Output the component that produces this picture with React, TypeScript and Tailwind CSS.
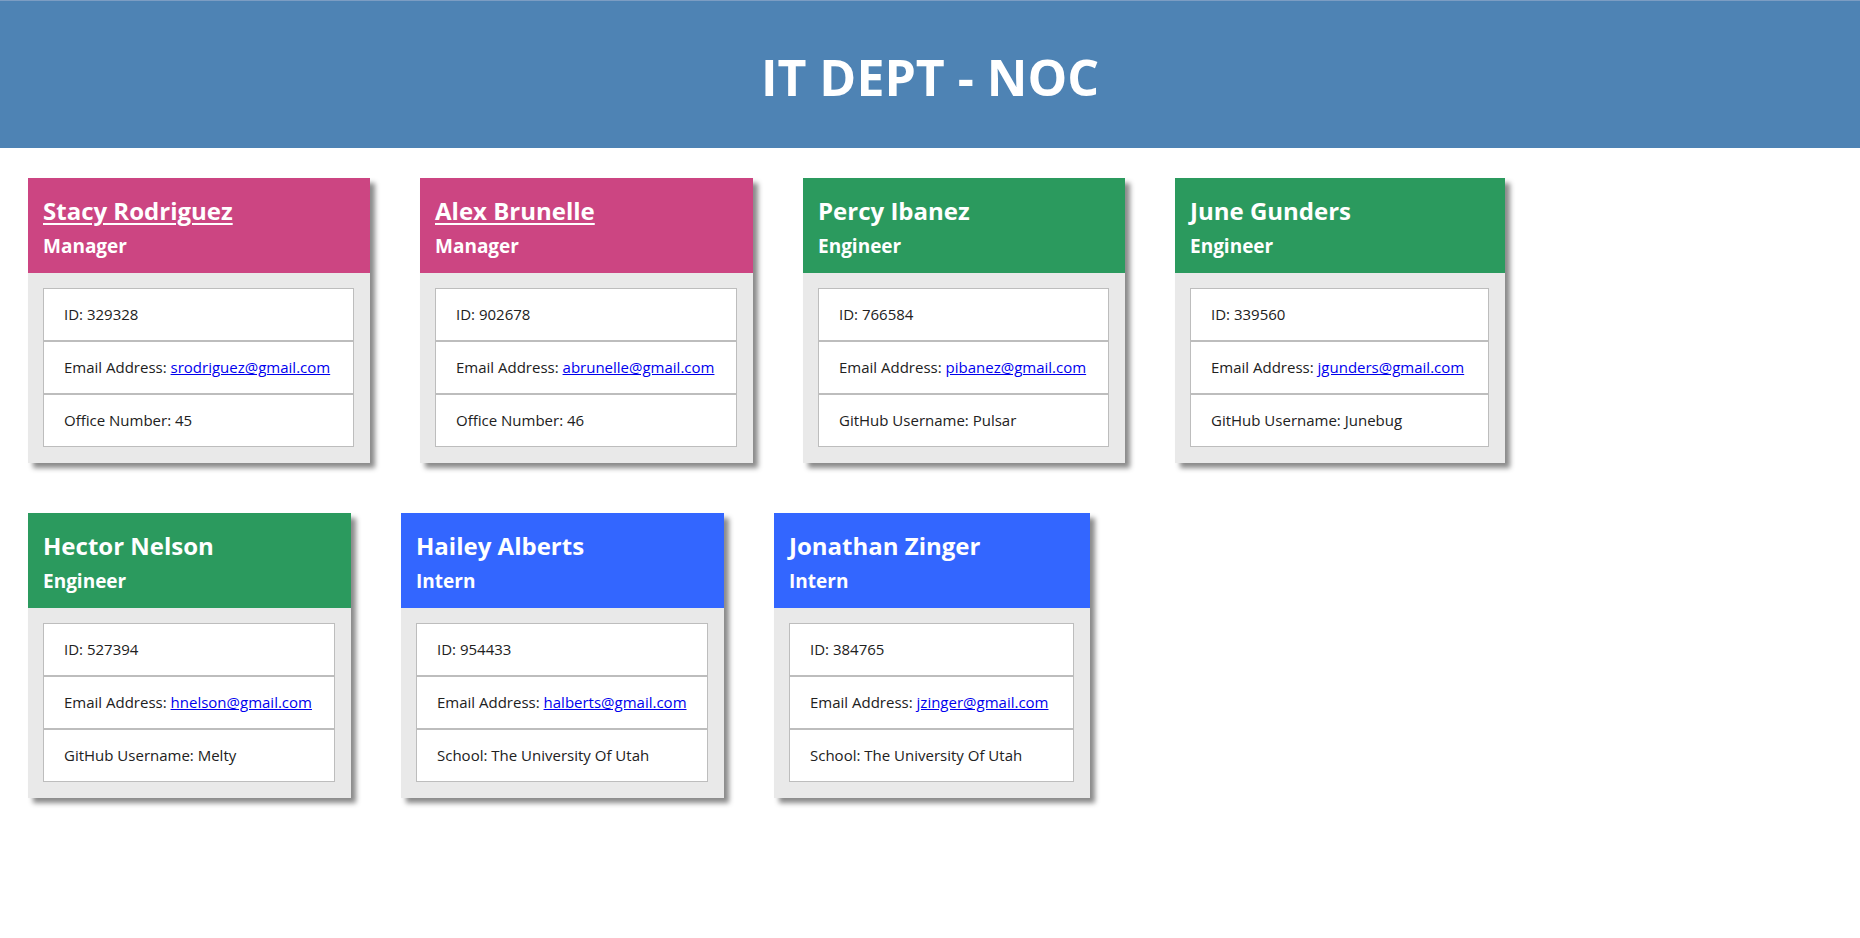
import React from "react";

interface Employee {
    name: string;
    role: "Manager" | "Engineer" | "Intern";
    id: string;
    email: string;
    extraLabel: string;
    extraValue: string;
    width: string;
}

const team: Employee[] = [
    { name: "Stacy Rodriguez", role: "Manager", id: "329328", email: "srodriguez@gmail.com", extraLabel: "Office Number", extraValue: "45", width: "w-[342px]" },
    { name: "Alex Brunelle", role: "Manager", id: "902678", email: "abrunelle@gmail.com", extraLabel: "Office Number", extraValue: "46", width: "w-[333px]" },
    { name: "Percy Ibanez", role: "Engineer", id: "766584", email: "pibanez@gmail.com", extraLabel: "GitHub Username", extraValue: "Pulsar", width: "w-[322px]" },
    { name: "June Gunders", role: "Engineer", id: "339560", email: "jgunders@gmail.com", extraLabel: "GitHub Username", extraValue: "Junebug", width: "w-[330px]" },
    { name: "Hector Nelson", role: "Engineer", id: "527394", email: "hnelson@gmail.com", extraLabel: "GitHub Username", extraValue: "Melty", width: "w-[323px]" },
    { name: "Hailey Alberts", role: "Intern", id: "954433", email: "halberts@gmail.com", extraLabel: "School", extraValue: "The University Of Utah", width: "w-[323px]" },
    { name: "Jonathan Zinger", role: "Intern", id: "384765", email: "jzinger@gmail.com", extraLabel: "School", extraValue: "The University Of Utah", width: "w-[316px]" },
];

const headerColor = {
    Manager: "bg-[#cc4582]",
    Engineer: "bg-[#2b9a5e]",
    Intern: "bg-[#3366ff]",
};

function EmployeeCard({ emp }: { emp: Employee }) {
    const isManager = emp.role === "Manager";
    return (
        <div className={`${emp.width} bg-[#e9e9e9] shadow-[5px_5px_5px_#8a8a8a]`}>
            <div className={`${headerColor[emp.role]} h-[95px] px-[15px] pt-[18px] text-white`}>
                <h2 className={`text-[24px] leading-[30px] font-bold ${isManager ? "underline underline-offset-[3px] decoration-2" : ""}`}>
                    {emp.name}
                </h2>
                <h3 className="mt-[9px] text-[19px] leading-[22px] font-bold">{emp.role}</h3>
            </div>
            <div className="pt-[15px] pr-[16px] pb-[16px] pl-[15px]">
                <ul className="bg-white text-[15px] leading-[25px] text-[#212121] whitespace-nowrap">
                    <li className="border border-[#bdbdbd] px-[20px] py-[13px]">ID: {emp.id}</li>
                    <li className="border border-[#bdbdbd] px-[20px] py-[13px]">
                        Email Address:{" "}
                        <a href={`mailto:${emp.email}`} className="text-[#0000ee] underline">
                            {emp.email}
                        </a>
                    </li>
                    <li className="border border-[#bdbdbd] px-[20px] py-[13px]">
                        {emp.extraLabel}: {emp.extraValue}
                    </li>
                </ul>
            </div>
        </div>
    );
}

export default function App() {
    return (
        <div className="min-h-screen bg-white font-['Open_Sans',sans-serif]">
            <header className="h-[148px] bg-[#4e83b4] border-t border-[#7c9dc3] flex items-center justify-center">
                <h1 className="text-white font-bold text-[50px] leading-none pt-[4px]">IT DEPT - NOC</h1>
            </header>
            <main className="flex flex-wrap gap-[50px] pl-[28px] pt-[30px]">
                {team.map((emp) => (
                    <EmployeeCard key={emp.id} emp={emp} />
                ))}
            </main>
        </div>
    );
}
